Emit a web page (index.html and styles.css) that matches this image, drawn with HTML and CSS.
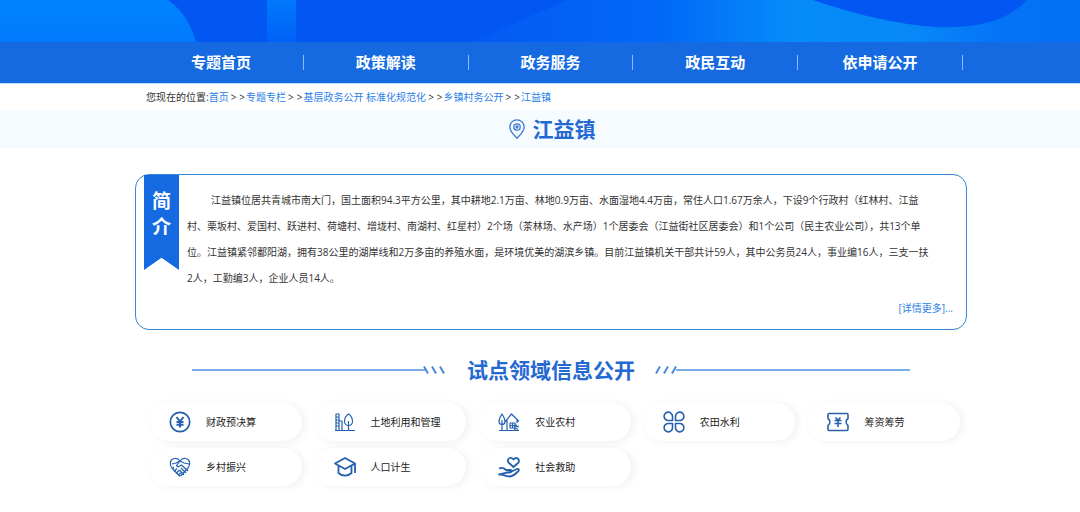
FILE: index.html
```html
<!DOCTYPE html>
<html lang="zh-CN">
<head>
<meta charset="utf-8">
<meta name="viewport" content="width=device-width, initial-scale=1">
<title>江益镇</title>
<link rel="stylesheet" href="styles.css">
</head>
<body>
<header>
  <svg class="hero" viewBox="0 0 1080 42" preserveAspectRatio="none" aria-hidden="true">
    <defs>
      <linearGradient id="left" x1="0" y1="0" x2="0" y2="1"><stop offset="0" stop-color="#0084ff"/><stop offset="1" stop-color="#007afd"/></linearGradient>
      <linearGradient id="strip" x1="0" y1="0" x2="0" y2="1"><stop offset="0" stop-color="#0078fc"/><stop offset="1" stop-color="#0062f8"/></linearGradient>
      <linearGradient id="glow" gradientUnits="userSpaceOnUse" x1="480" y1="0" x2="1080" y2="0"><stop offset="0" stop-color="#035bf3"/><stop offset=".3" stop-color="#0268f8"/><stop offset=".52" stop-color="#058cf8"/><stop offset=".72" stop-color="#0788f8"/><stop offset=".87" stop-color="#0573f7"/><stop offset="1" stop-color="#0470f3"/></linearGradient>
    </defs>
    <rect width="1080" height="42" fill="#0257f3"/>
    <path d="M0 0H168Q188 14 196 42H0Z" fill="url(#left)"/>
    <rect x="267" width="29" height="42" fill="url(#strip)"/>
    <path d="M474 42Q520 20 568 0H1080V42Z" fill="url(#glow)"/>
    <path d="M813 0Q880 23 935 27Q1000 30 1027 0Z" fill="#0256f1"/>
  </svg>
  <nav class="nav">
    <a class="nav-link" href="#">专题首页</a>
    <a class="nav-link" href="#">政策解读</a>
    <a class="nav-link" href="#">政务服务</a>
    <a class="nav-link" href="#">政民互动</a>
    <a class="nav-link" href="#">依申请公开</a>
  </nav>
</header>
<div class="crumbs">您现在的位置:<a href="#">首页</a><span class="sep">&gt;</span><span class="sep">&gt;</span><a href="#">专题专栏</a><span class="sep">&gt;</span><span class="sep">&gt;</span><a href="#">基层政务公开 标准化规范化</a><span class="sep">&gt;</span><span class="sep">&gt;</span><a href="#">乡镇村务公开</a><span class="sep">&gt;</span><span class="sep">&gt;</span><a href="#">江益镇</a></div>
<div class="band">
  <svg class="pin" viewBox="0 0 16 20" aria-hidden="true"><path d="M8 19.200C5 16 .8 12.500 .8 8a7.200 7.200 0 0 1 14.400 0c0 4.500-4.200 8-7.200 11.200Z"/><circle cx="8" cy="8" r="3.200"/><circle cx="8" cy="8" r="1"/></svg>
  <h1 class="title">江益镇</h1>
</div>
<main class="page">
  <section class="intro">
    <h2 class="ribbon">简<br>介</h2>
    <div class="intro-body">
      <p class="intro-text">江益镇位居共青城市南大门，国土面积94.3平方公里，其中耕地2.1万亩、林地0.9万亩、水面湿地4.4万亩，常住人口1.67万余人，下设9个行政村（红林村、江益<br>村、栗坂村、爱国村、跃进村、荷塘村、增垅村、南湖村、红星村）2个场（茶林场、水产场）1个居委会（江益街社区居委会）和1个公司（民主农业公司），共13个单<br>位。江益镇紧邻鄱阳湖，拥有38公里的湖岸线和2万多亩的养殖水面，是环境优美的湖滨乡镇。目前江益镇机关干部共计59人，其中公务员24人，事业编16人，三支一扶<br>2人，工勤编3人，企业人员14人。</p>
      <a class="more" href="#">[详情更多]...</a>
    </div>
  </section>
  <div class="heading">
    <span class="rule"></span>
    <svg class="ticks" viewBox="0 0 24 8" aria-hidden="true"><path class="ticks-rule" d="M0 4H3"/><path d="M1 .5L5 7.500M9 .5L13 7.500M17 .5L21 7.500"/></svg>
    <h2 class="title heading-title">试点领域信息公开</h2>
    <svg class="ticks" viewBox="0 0 24 8" aria-hidden="true"><path class="ticks-rule" d="M21 4H24"/><path d="M1 7.500L5 .5M9 7.500L13 .5M17 7.500L21 .5"/></svg>
    <span class="rule"></span>
  </div>
  <div class="cards">
    <a class="card" href="#"><svg class="icon" viewBox="0 0 22 22" aria-hidden="true"><circle cx="11" cy="11" r="9.700" stroke-width="1.700"/><path stroke-width="2" d="M7.500 6L11 10.500L14.500 6M11 10.500V16.500M7.500 11H14.500M7.500 13.800H14.500"/></svg>财政预决算</a>
    <a class="card" href="#"><svg class="icon" viewBox="0 0 22 22" aria-hidden="true"><path d="M1 19.500H21M2 19V3H5V19M2 6H5M2 9H5M2 12H5M2 15H5M5 10H8V19M14.500 19V10M14.500 3C11.500 5 10.500 8 10.500 10.500a4 4 0 0 0 8 0C18.500 8 17.500 5 14.500 3Z"/></svg>土地利用和管理</a>
    <a class="card" href="#"><svg class="icon" viewBox="0 0 22 22" aria-hidden="true"><path d="M1 19.500H21M4 19V9M4 3C2 6 1 8 1 10.500s1.500 3 3 3s3-.5 3-3S6 6 4 3ZM7 11L13.500 3L21 10.500M9 9V19M19 9V12"/><path d="M12 12H17V17H12ZM14.500 12V17M12 14.500H17M16 16l2-2 1 2 2-1M16 18.500l2-1 2 1"/></svg>农业农村</a>
    <a class="card" href="#"><svg class="icon" viewBox="0 0 22 22" aria-hidden="true"><path stroke-width="1.600" d="M9.500 9.500H5.500a4.200 4.200 0 1 1 4-4ZM12.500 9.500H16.500a4.200 4.200 0 1 0-4-4ZM9.500 12.500H5.500a4.200 4.200 0 1 0 4 4ZM12.500 12.500H16.500a4.200 4.200 0 1 1-4 4Z"/></svg>农田水利</a>
    <a class="card" href="#"><svg class="icon" viewBox="0 0 22 22" aria-hidden="true"><path stroke-width="1.600" d="M2 2.500H20Q21 2.500 21 4V7.500C18.500 9 18.500 13 21 14.500V18Q21 19.500 20 19.500H2Q1 19.500 1 18V14.500C3.500 13 3.500 9 1 7.500V4Q1 2.500 2 2.500Z"/><path stroke-width="1.600" d="M8.500 6.500L11 9L13.500 6.500M11 9V16M7.500 9.500H14.500M7.500 12.500H14.500"/></svg>筹资筹劳</a>
    <a class="card" href="#"><svg class="icon" viewBox="0 0 22 22" aria-hidden="true"><path d="M3 12C0 8 1 3 5.500 2.500C8 2 10 3.500 11 5C12 3.500 14 2 16.500 2.500C21 3 22 8 19 12L12 19.500L10.500 20L3 12Z"/><path d="M3 8L7 7L11 5M11 5L7.500 9.500L9 11L12.500 9L19 15M20 8L15 7L11 5M3 13L5 11M5 15.500L8 12.500M7 17.500L10.500 14M9.500 19L12.500 16M12 12L17 17M10.500 14L15 19"/></svg>乡村振兴</a>
    <a class="card" href="#"><svg class="icon icon-bold" viewBox="0 0 22 22" aria-hidden="true"><path d="M1 7.500L11 2L21 7.500L11 13ZM4.500 9.500V17C8 20.500 14 20.500 17.500 17V9.500M21 7.500V17"/></svg>人口计生</a>
    <a class="card" href="#"><svg class="icon icon-bold" viewBox="0 0 22 22" aria-hidden="true"><path d="M15.500 11L10.500 6.500C8.500 3 12.500 0 15.500 3.500C18.500 0 22 3.500 20.500 6.500ZM1 12.500C4 11 6 12 8 14H12.500C14 14 14 16.500 12 16.500H8M13.500 15.500L19 13C21 12.500 21.500 14 20 15.500C17 18.500 14 20.500 11 20.500C7 20.500 5 18 1 18.500Z"/></svg>社会救助</a>
  </div>
</main>
</body>
</html>
```
FILE: styles.css
```css
* {
  box-sizing: border-box;
}

body {
  margin: 0;
  background: #fff;
  color: #333;
  font-family: "Open Sans", "Noto Sans CJK SC", sans-serif;
  font-size: 10px;
}

a {
  color: #2b80e8;
  text-decoration: none;
}

h1,
h2,
p {
  margin: 0;
}

.hero {
  display: block;
  width: 100%;
  height: 42px;
}

.nav {
  display: grid;
  grid-template-columns: repeat(5, 1fr);
  align-items: center;
  padding: 13px 117px 13px 139px;
  background: #156ae2;
  border-bottom: 1px solid #bcd8f8;
}

.nav-link {
  border-right: 1px solid #8fbcf5;
  color: #fff;
  font-size: 15px;
  font-weight: 700;
  line-height: 15px;
  text-align: center;
}

.crumbs {
  padding: 0 113px 0 146px;
  line-height: 26px;
}

.sep {
  padding: 0 1px 0 2px;
}

.band {
  display: flex;
  align-items: center;
  justify-content: center;
  gap: 8px;
  padding: 4px 0 4px 24px;
  background: #f5fbff;
}

.title {
  color: #2468d2;
  font-size: 21px;
  font-weight: 700;
  line-height: 30px;
}

.pin {
  width: 16px;
  height: 20px;
  fill: none;
  stroke: #3a7bd0;
  stroke-width: 1.3;
}

.page {
  padding: 26px 113px 24px 135px;
}

.intro {
  display: flex;
  align-items: flex-start;
  gap: 8px;
  padding: 0 13px 0 8px;
  border: 1px solid #3787d8;
  border-radius: 14px;
}

.ribbon {
  flex: none;
  width: 35px;
  padding: 13px 0 30px;
  background: #156ae2;
  clip-path: polygon(0 0, 100% 0, 100% 100%, 50% 87%, 0 100%);
  color: #fff;
  font-size: 19px;
  line-height: 26px;
  text-align: center;
}

.intro-body {
  display: flex;
  flex: 1;
  flex-direction: column;
  padding: 12px 0 8px;
}

.intro-text {
  line-height: 26px;
  text-indent: 24px;
}

.more {
  align-self: flex-end;
  margin-top: 4px;
  line-height: 26px;
}

.heading {
  display: flex;
  align-items: center;
  margin: 25px 57px 0;
}

.rule {
  flex: 1;
  height: 2px;
  background: #77aeea;
}

.ticks {
  width: 24px;
  height: 8px;
  fill: none;
  stroke: #4a8bdc;
  stroke-width: 2;
}

.ticks-rule {
  stroke: #77aeea;
}

.heading-title {
  padding: 0 20px;
}

.cards {
  display: grid;
  grid-template-columns: repeat(5, 1fr);
  gap: 7px 13px;
  margin: 18px 7px 0 15px;
}

.card {
  display: flex;
  align-items: center;
  gap: 15px;
  padding: 8px 0 8px 19px;
  border-radius: 20px;
  box-shadow: 3px 1px 8px #f0f0f0;
  color: #222;
  line-height: 22px;
}

.icon {
  width: 22px;
  height: 22px;
  fill: none;
  stroke: #2460ad;
  stroke-width: 1.2;
  stroke-linejoin: round;
}

.icon-bold {
  stroke-width: 1.8;
}
```
